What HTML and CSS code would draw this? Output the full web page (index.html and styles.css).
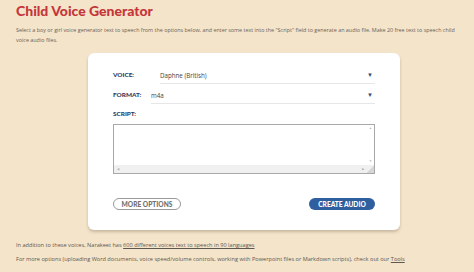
FILE: index.html
```html
<!DOCTYPE html>
<html lang="en">
<head>
    <meta charset="UTF-8">
    <meta name="viewport" content="width=device-width, initial-scale=1.0">
    <title>Child Voice Generator</title>
    <link rel="stylesheet" href="styles.css">
</head>
<body>
    <h1 class="title">Child Voice Generator</h1>
    <p class="intro">Select a boy or girl voice generator text to speech from the options below, and enter some text into the "Script" field to generate an audio file. Make 20 free text to speech child voice audio files.</p>

    <div class="card">
        <div class="field-row">
            <span class="label label-voice">VOICE:</span>
            <div class="select">
                <span>Daphne (British)</span>
                <span class="arrow">&#9660;</span>
            </div>
        </div>
        <div class="field-row">
            <span class="label label-format">FORMAT:</span>
            <div class="select">
                <span>m4a</span>
                <span class="arrow">&#9660;</span>
            </div>
        </div>
        <div class="label label-script">SCRIPT:</div>
        <div class="script-box">
            <div class="script-main">
                <div class="script-text"></div>
                <div class="vbar">
                    <span class="tiny">&#9650;</span>
                    <span class="tiny">&#9660;</span>
                </div>
            </div>
            <div class="hbar">
                <span class="tiny">&#9664;</span>
                <span class="tiny hbar-right">&#9654;</span>
                <span class="corner"></span>
            </div>
        </div>
        <div class="button-row">
            <button class="btn btn-outline">MORE OPTIONS</button>
            <button class="btn btn-primary">CREATE AUDIO</button>
        </div>
    </div>

    <p class="note">In addition to these voices, Narakeet has <a href="#">600 different voices text to speech in 90 languages</a></p>
    <p class="note">For more options (uploading Word documents, voice speed/volume controls, working with Powerpoint files or Markdown scripts), check out our <a href="#">Tools</a></p>
</body>
</html>
```

FILE: styles.css
```css
body {
    margin: 0;
    padding: 0 8px 0 16px;
    background-color: #f4e4ca;
    font-family: "Open Sans", Arial, sans-serif;
    color: #555;
}
.title {
    margin: 0;
    padding-top: 2px;
    font-family: Lato, "Open Sans", sans-serif;
    font-size: 14px;
    font-weight: 900;
    color: #c4363a;
    line-height: 18px;
}
.intro {
    margin: 5px 0 0;
    font-size: 5.4px;
    line-height: 10px;
    color: #6a6258;
}
.card {
    width: 262px;
    margin: 8px 0 0 72px;
    padding: 11px 25px 20px;
    background: white;
    border-radius: 6px;
    box-shadow: 0 2px 3px rgba(120, 100, 80, 0.35);
    font-family: "Open Sans", Arial, sans-serif;
}
.field-row {
    display: flex;
    align-items: center;
    height: 20px;
}
.label {
    font-family: Lato, Arial, sans-serif;
    font-size: 6.4px;
    font-weight: 900;
    color: #2e3d62;
}
.label-voice {
    width: 47px;
}
.label-format {
    width: 38px;
}
.label-script {
    margin-top: 4px;
    height: 12px;
    line-height: 12px;
}
.select {
    flex: 1;
    display: flex;
    justify-content: space-between;
    align-items: center;
    height: 15px;
    border-bottom: 1px solid #e6e6e6;
    font-size: 6.2px;
    color: #444;
    margin-top: 3px;
}
.arrow {
    font-size: 6px;
    color: #3b4a6a;
    padding-right: 2px;
}
.script-box {
    margin-top: 4px;
    height: 48px;
    border: 1px solid #a8a8a8;
    display: flex;
    flex-direction: column;
}
.script-main {
    flex: 1;
    display: flex;
}
.script-text {
    flex: 1;
}
.vbar {
    width: 7px;
    display: flex;
    flex-direction: column;
    justify-content: space-between;
    align-items: center;
    padding: 2px 0;
}
.hbar {
    height: 8px;
    background: #f0f0f0;
    display: flex;
    align-items: center;
    padding-left: 3px;
}
.hbar-right {
    margin-left: auto;
    margin-right: 3px;
}
.tiny {
    font-size: 3px;
    color: #b0b0b0;
    line-height: 3px;
}
.corner {
    width: 7px;
    height: 8px;
    background: linear-gradient(135deg, #f0f0f0 50%, #d6d6d6 50%);
}
.button-row {
    display: flex;
    justify-content: space-between;
    margin-top: 24px;
}
.btn {
    height: 12px;
    padding: 0;
    border-radius: 7px;
    font-family: Lato, Arial, sans-serif;
    font-size: 6.6px;
    font-weight: 900;
    white-space: nowrap;
    cursor: pointer;
}
.btn-outline {
    width: 68px;
    background: white;
    border: 1px solid #9a9a9a;
    color: #6f6f6f;
}
.btn-primary {
    width: 66px;
    background: #2f5f9e;
    border: none;
    color: white;
}
.note {
    margin: 11px 0 0;
    font-size: 5.6px;
    line-height: 8px;
    color: #5d574f;
}
.note + .note {
    margin-top: 6px;
}
.note a {
    color: #5d574f;
}
```
